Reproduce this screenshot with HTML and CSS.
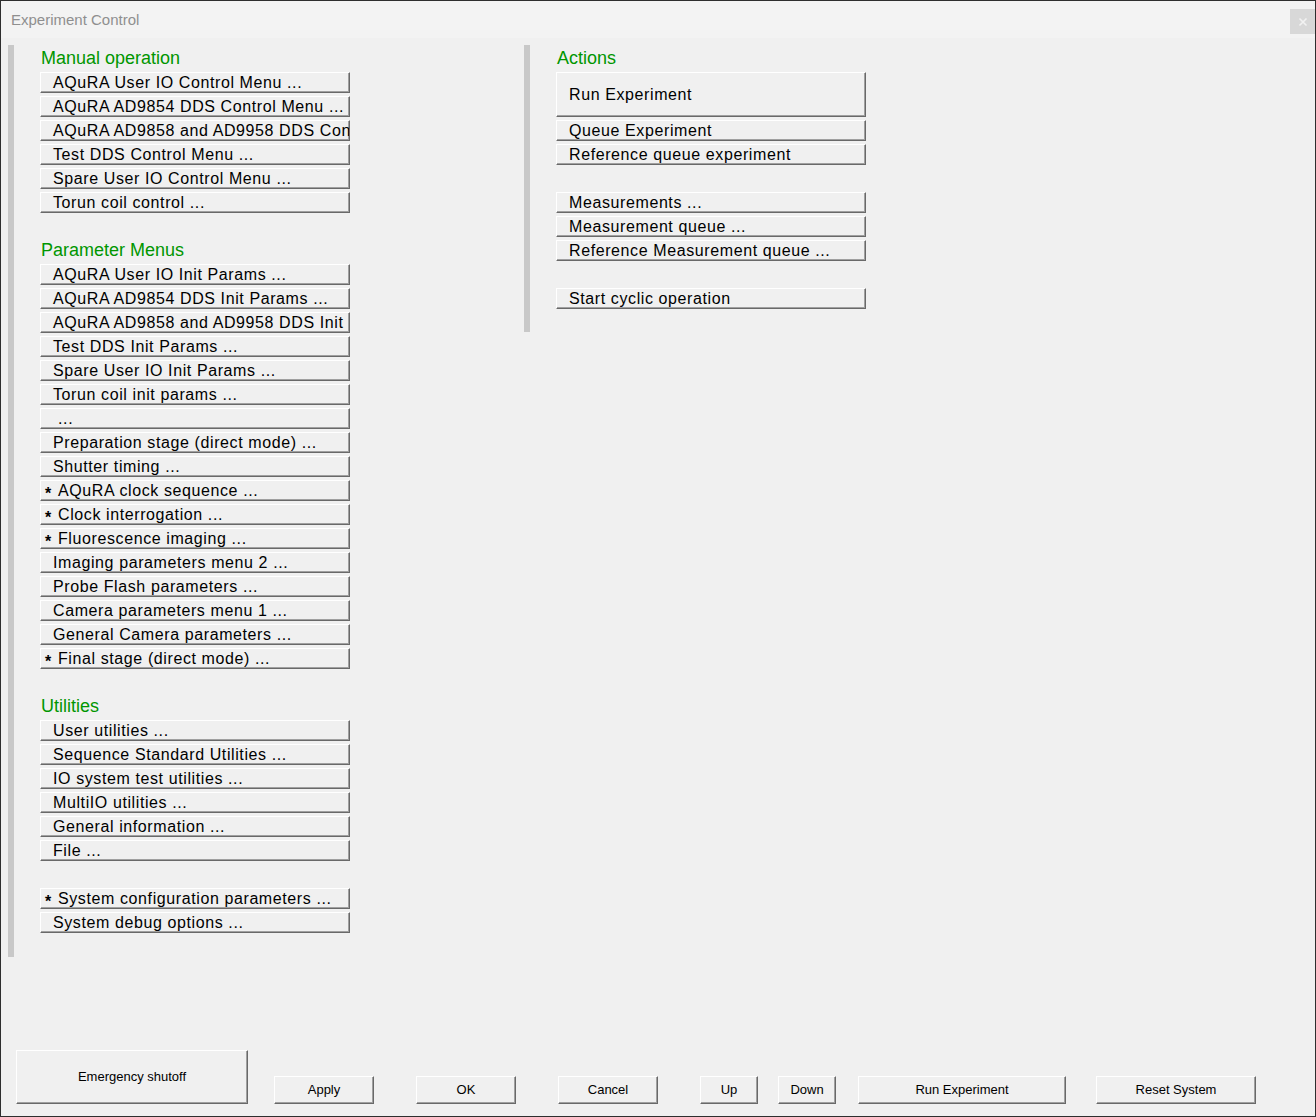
FILE: index.html
```html
<!DOCTYPE html>
<html>
<head>
<meta charset="utf-8">
<title>Experiment Control</title>
<link rel="stylesheet" href="styles.css">
</head>
<body>
<div class="window">
  <div class="titlebar">
    <span class="title">Experiment Control</span>
    <div class="close">
      <svg width="10" height="10" viewBox="0 0 10 10"><path d="M1.5 1.5 L8.5 8.5 M8.5 1.5 L1.5 8.5" stroke="#f2f2f2" stroke-width="1.6" fill="none"/></svg>
    </div>
  </div>
  <div class="main">
    <div class="col col-left">
      <div class="heading">Manual operation</div>
      <div class="btn">AQuRA User IO Control Menu ...</div>
      <div class="btn">AQuRA AD9854 DDS Control Menu ...</div>
      <div class="btn">AQuRA AD9858 and AD9958 DDS Control Menu ...</div>
      <div class="btn">Test DDS Control Menu ...</div>
      <div class="btn">Spare User IO Control Menu ...</div>
      <div class="btn">Torun coil control ...</div>
      <div class="spacer"></div>
      <div class="heading">Parameter Menus</div>
      <div class="btn">AQuRA User IO Init Params ...</div>
      <div class="btn">AQuRA AD9854 DDS Init Params ...</div>
      <div class="btn">AQuRA AD9858 and AD9958 DDS Init Params ...</div>
      <div class="btn">Test DDS Init Params ...</div>
      <div class="btn">Spare User IO Init Params ...</div>
      <div class="btn">Torun coil init params ...</div>
      <div class="btn">&nbsp;...</div>
      <div class="btn">Preparation stage (direct mode) ...</div>
      <div class="btn">Shutter timing ...</div>
      <div class="btn btn-star"><span class="star">*</span>AQuRA clock sequence ...</div>
      <div class="btn btn-star"><span class="star">*</span>Clock interrogation ...</div>
      <div class="btn btn-star"><span class="star">*</span>Fluorescence imaging ...</div>
      <div class="btn">Imaging parameters menu 2 ...</div>
      <div class="btn">Probe Flash parameters ...</div>
      <div class="btn">Camera parameters menu 1 ...</div>
      <div class="btn">General Camera parameters ...</div>
      <div class="btn btn-star"><span class="star">*</span>Final stage (direct mode) ...</div>
      <div class="spacer"></div>
      <div class="heading">Utilities</div>
      <div class="btn">User utilities ...</div>
      <div class="btn">Sequence Standard Utilities ...</div>
      <div class="btn">IO system test utilities ...</div>
      <div class="btn">MultiIO utilities ...</div>
      <div class="btn">General information ...</div>
      <div class="btn">File ...</div>
      <div class="spacer"></div>
      <div class="btn btn-star"><span class="star">*</span>System configuration parameters ...</div>
      <div class="btn">System debug options ...</div>
    </div>
    <div class="col col-right">
      <div class="heading">Actions</div>
      <div class="btn btn-tall">Run Experiment</div>
      <div class="btn">Queue Experiment</div>
      <div class="btn">Reference queue experiment</div>
      <div class="spacer"></div>
      <div class="btn">Measurements ...</div>
      <div class="btn">Measurement queue ...</div>
      <div class="btn">Reference Measurement queue ...</div>
      <div class="spacer"></div>
      <div class="btn">Start cyclic operation</div>
    </div>
  </div>
  <div class="footer">
    <div class="fbtn f-emergency">Emergency shutoff</div>
    <div class="fbtn f-apply">Apply</div>
    <div class="fbtn f-ok">OK</div>
    <div class="fbtn f-cancel">Cancel</div>
    <div class="fbtn f-up">Up</div>
    <div class="fbtn f-down">Down</div>
    <div class="fbtn f-run">Run Experiment</div>
    <div class="fbtn f-reset">Reset System</div>
  </div>
</div>
</body>
</html>
```

FILE: styles.css
```css
* {
  box-sizing: border-box;
}

html, body {
  margin: 0;
  padding: 0;
}

body {
  font-family: "Liberation Sans", Arial, sans-serif;
  background: #f0f0f0;
  color: #000;
}

.window {
  height: 1117px;
  border: 1px solid #2e2e2e;
  display: flex;
  flex-direction: column;
  background: #f0f0f0;
}

.titlebar {
  height: 37px;
  background: #f3f3f3;
  display: flex;
  align-items: center;
  justify-content: space-between;
  padding-left: 10px;
}

.title {
  font-size: 15px;
  color: #8f8f8f;
}

.close {
  align-self: flex-start;
  margin-top: 8px;
  width: 25px;
  height: 25px;
  background: #d8d8d8;
  display: flex;
  align-items: center;
  justify-content: center;
}

.main {
  flex: 1;
  display: flex;
  align-items: flex-start;
  padding-top: 7px;
  padding-left: 7px;
}

.col {
  border-left: 6px solid #c8c8c8;
  padding: 3px 0 0 26px;
}

.col-left {
  width: 516px;
  padding-bottom: 21px;
}

.col-right {
  padding-bottom: 20px;
  padding-right: 30px;
}

.heading {
  height: 24px;
  line-height: 20px;
  font-size: 18px;
  color: #009600;
  padding-left: 1px;
}

.spacer {
  height: 24px;
}

.btn {
  width: 310px;
  height: 21px;
  margin-bottom: 3px;
  background: #f0f0f0;
  border-top: 1px solid #ffffff;
  border-left: 1px solid #ffffff;
  border-right: 1px solid #696969;
  border-bottom: 1px solid #696969;
  box-shadow: inset -1px -1px 0 #a0a0a0;
  font-size: 16px;
  line-height: 18px;
  padding-top: 1px;
  letter-spacing: 0.6px;
  padding-left: 12px;
  white-space: nowrap;
  overflow: hidden;
}

.btn-star {
  padding-left: 4px;
}

.star {
  display: inline-block;
  width: 13px;
  font-weight: bold;
  vertical-align: -3px;
  letter-spacing: 0;
}

.btn-tall {
  height: 45px;
  display: flex;
  align-items: center;
  padding-top: 0;
}

.footer {
  display: flex;
  align-items: flex-end;
  padding: 0 0 12px 15px;
}

.fbtn {
  height: 28px;
  background: #f0f0f0;
  border-top: 1px solid #ffffff;
  border-left: 1px solid #ffffff;
  border-right: 1px solid #696969;
  border-bottom: 1px solid #696969;
  box-shadow: inset -1px -1px 0 #a0a0a0;
  font-size: 13px;
  padding-bottom: 2px;
  display: flex;
  align-items: center;
  justify-content: center;
}

.f-emergency {
  width: 232px;
  height: 54px;
}

.f-apply {
  width: 100px;
  margin-left: 26px;
}

.f-ok {
  width: 100px;
  margin-left: 42px;
}

.f-cancel {
  width: 100px;
  margin-left: 42px;
}

.f-up {
  width: 58px;
  margin-left: 42px;
}

.f-down {
  width: 58px;
  margin-left: 20px;
}

.f-run {
  width: 208px;
  margin-left: 22px;
}

.f-reset {
  width: 160px;
  margin-left: 30px;
}
```
